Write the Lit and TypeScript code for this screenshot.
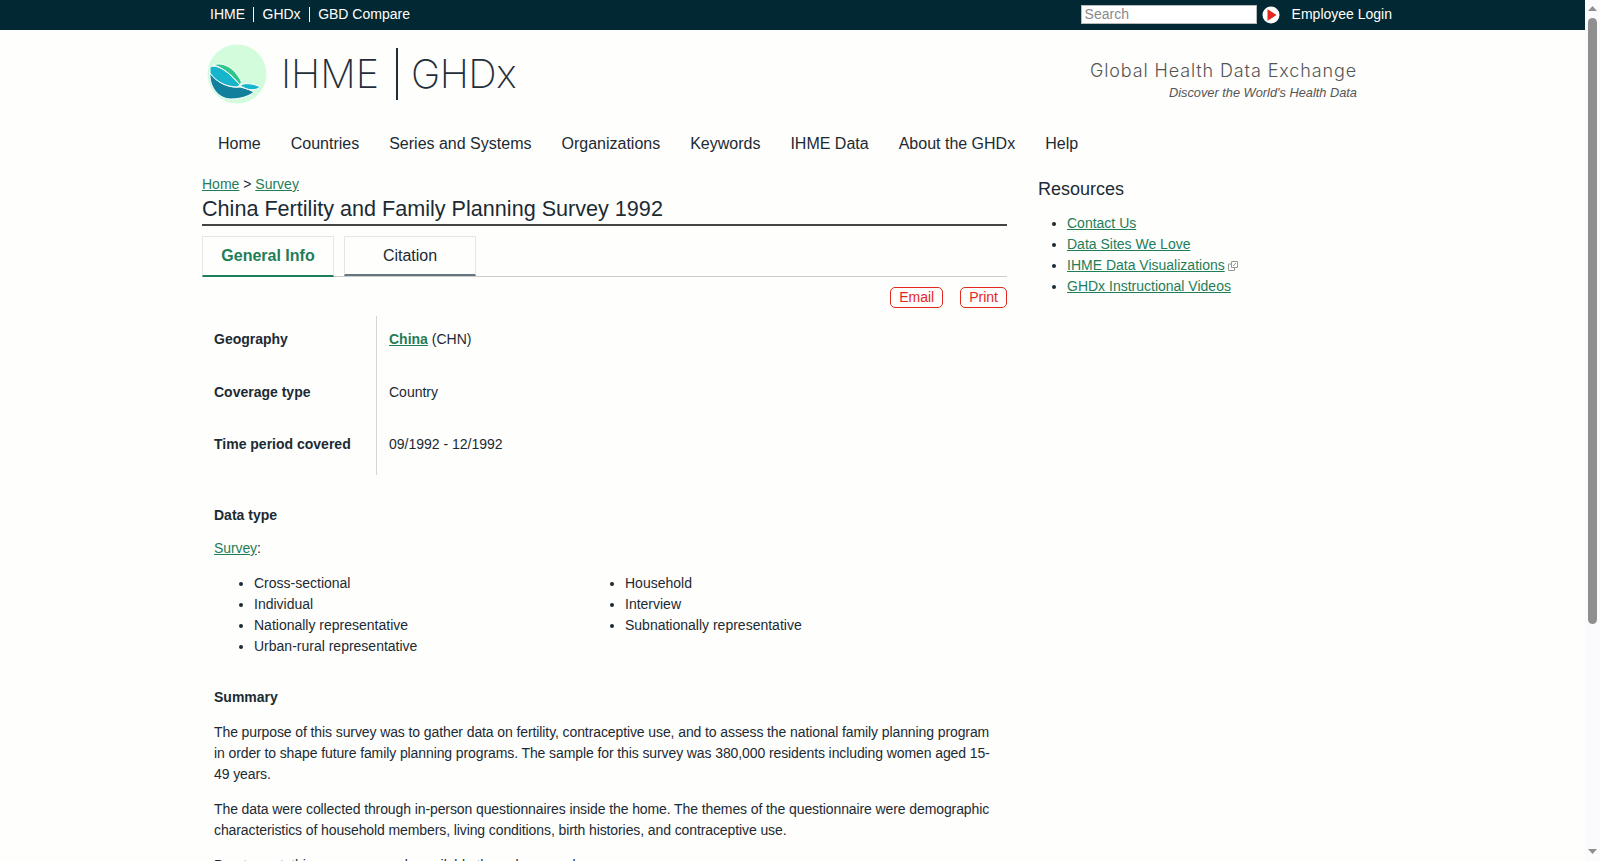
import { LitElement, html, css } from 'lit';
import { customElement } from 'lit/decorators.js';

const nav = ['Home', 'Countries', 'Series and Systems', 'Organizations', 'Keywords', 'IHME Data', 'About the GHDx', 'Help'];
const dataTypes = [
  'Cross-sectional',
  'Household',
  'Individual',
  'Interview',
  'Nationally representative',
  'Subnationally representative',
  'Urban-rural representative',
];

@customElement('app-root')
export class AppRoot extends LitElement {
  static styles = css`
    :host {
      display: flex;
      height: 861px;
      overflow: hidden;
      background: #fefefd;
      color: #1c2a33;
      font-family: 'Liberation Sans', Arial, sans-serif;
      font-size: 14px;
      line-height: 21px;
    }
    a {
      color: #1f7d58;
    }
    .page {
      flex: 1;
      min-width: 0;
      overflow: hidden;
    }
    .topbar {
      box-sizing: border-box;
      height: 30px;
      background: #022933;
      color: #fff;
      display: flex;
      align-items: center;
      padding: 0 193px 1px 202px;
    }
    .toplinks {
      display: flex;
      flex: 1;
      padding-left: 8px;
    }
    .toplinks span {
      line-height: 15px;
      padding-right: 8px;
      margin-right: 8.5px;
      border-right: 1px solid #fff;
    }
    .toplinks span:last-child {
      border: 0;
    }
    .search {
      box-sizing: border-box;
      width: 176px;
      height: 19px;
      background: #fff;
      border: 1px solid #bbb;
      color: #8a8a8a;
      padding: 0 3px;
      line-height: 17px;
    }
    .go {
      margin: 0 12px 0 5px;
      display: block;
    }
    .brand {
      box-sizing: border-box;
      height: 86px;
      display: flex;
      align-items: center;
      padding: 2px 228px 0 207px;
    }
    .wordmark {
      display: flex;
      align-items: center;
      flex: 1;
      margin-left: 14px;
      font-family: Inter, sans-serif;
      font-weight: 200;
      font-size: 39.5px;
      color: #1f2f3a;
    }
    .wordmark i {
      display: block;
      width: 2px;
      height: 52px;
      background: #1f2f3a;
      margin: 0 13px 0 17px;
    }
    .wordmark span {
      letter-spacing: -0.5px;
    }
    .tagline {
      text-align: right;
      margin-top: 12px;
      color: #555;
    }
    .tagline b {
      display: block;
      font-family: Inter, sans-serif;
      font-weight: 300;
      font-size: 18px;
      letter-spacing: 0.88px;
      line-height: 24px;
    }
    .tagline em {
      display: block;
      font-size: 12.8px;
      line-height: 19px;
    }
    .nav {
      display: flex;
      gap: 30px;
      padding: 15px 0 0 218px;
      height: 31px;
      font-size: 16px;
      line-height: 26px;
      color: #1c2a33;
    }
    .columns {
      display: flex;
      padding: 0 0 0 202px;
      margin-top: 12px;
    }
    .main {
      width: 805px;
      flex: none;
    }
    .crumbs {
      line-height: 21px;
    }
    h1 {
      margin: 0;
      font-size: 21.6px;
      font-weight: 400;
      line-height: 27px;
      padding-bottom: 2px;
      border-bottom: 2px solid #444;
    }
    .tabs {
      display: flex;
      gap: 10px;
      margin-top: 10px;
      height: 40px;
      border-bottom: 1px solid #ccc;
    }
    .tab {
      box-sizing: border-box;
      width: 132px;
      height: 40px;
      border: 1px solid #e6e6e6;
      border-bottom: 2px solid #66757d;
      text-align: center;
      font-size: 16px;
      line-height: 37px;
    }
    .tab.active {
      height: 41px;
      border-bottom-color: #1f7d58;
      color: #1f7d58;
      font-weight: 700;
    }
    .actions {
      display: flex;
      justify-content: flex-end;
      gap: 17px;
      margin-top: 10px;
    }
    .actions span {
      box-sizing: border-box;
      height: 21px;
      line-height: 19px;
      padding: 0 8px;
      border: 1px solid #e5281f;
      border-radius: 5px;
      color: #e5281f;
    }
    .facts {
      display: grid;
      grid-template-columns: 174px 1fr;
      margin-top: 8px;
      width: fit-content;
    }
    .facts b,
    .facts div {
      height: 52.5px;
      box-sizing: border-box;
      padding: 13px 12px 0;
    }
    .facts div {
      border-left: 1px solid #d5d5d5;
    }
    .facts b:nth-of-type(3),
    .facts div:last-child {
      height: 54px;
    }
    .body {
      padding: 0 12px;
    }
    .body h4 {
      margin: 30px 0 0;
      font-size: 14px;
    }
    .body p {
      margin: 14px 0 0;
      letter-spacing: -0.1px;
    }
    .body h4 + p.tight {
      margin-top: 12px;
    }
    .types {
      display: grid;
      grid-template-columns: 371px 1fr;
      margin: 14px 0 0;
      padding: 0 0 0 40px;
    }
    .side {
      margin-left: 31px;
    }
    .side h2 {
      margin: 1px 0 0;
      font-size: 18px;
      font-weight: 400;
      line-height: 28px;
    }
    .side ul {
      margin: 10px 0 0;
      padding-left: 29px;
    }
    .ext {
      margin-left: 3px;
      vertical-align: -1px;
    }
    .scrollbar {
      flex: none;
      width: 15px;
      box-sizing: border-box;
      background: #fbfbfd;
      display: flex;
      flex-direction: column;
      align-items: center;
      padding: 6px 0 7px;
    }
    .thumb {
      width: 9px;
      height: 606px;
      margin-top: 7px;
      border-radius: 5px;
      background: #8f8f8f;
    }
    .spacer {
      flex: 1;
    }
    .scrollbar svg {
      display: block;
    }
  `;

  render() {
    return html`
      <div class="page">
        <div class="topbar">
          <div class="toplinks"><span>IHME</span><span>GHDx</span><span>GBD Compare</span></div>
          <div class="search">Search</div>
          <svg class="go" width="18" height="18" viewBox="0 0 18 18">
            <circle cx="9" cy="9" r="8.5" fill="#fff" />
            <path d="M5.5 3.2 14.5 9l-9 5.800z" fill="#e5281f" />
          </svg>
          <span>Employee Login</span>
        </div>
        <div class="brand">
          <svg width="60" height="60" viewBox="0 0 60 60">
            <circle cx="30" cy="30" r="29.500" fill="#d3fcdc" />
            <path d="M3 29C2 42 11 55 24 55 34 55 42 52 47 48 41 45 37 44 33 43 24 44 12 41 3 29z" fill="#127f9c" stroke="#fff" stroke-width="1" />
            <path d="M3 23C10 20 20 26 33 41L30 43C20 43 9 38 3 29z" fill="#17b5cc" stroke="#fff" stroke-width="1" />
            <path d="M6 21C18 17 29 26 34.500 38L33 41C24 30 15 23 6 21z" fill="#2fc78c" stroke="#fff" stroke-width="1" />
            <path d="M33 41C38 39 46 39 53 43 49 47 40 47 33 41z" fill="#17b5cc" stroke="#fff" stroke-width="1" />
          </svg>
          <div class="wordmark">IHME<i></i><span>GHDx</span></div>
          <div class="tagline"><b>Global Health Data Exchange</b><em>Discover the World's Health Data</em></div>
        </div>
        <div class="nav">${nav.map((n) => html`<span>${n}</span>`)}</div>
        <div class="columns">
          <div class="main">
            <div class="crumbs"><a href="#">Home</a> &gt; <a href="#">Survey</a></div>
            <h1>China Fertility and Family Planning Survey 1992</h1>
            <div class="tabs">
              <div class="tab active">General Info</div>
              <div class="tab">Citation</div>
            </div>
            <div class="actions"><span>Email</span><span>Print</span></div>
            <div class="facts">
              <b>Geography</b>
              <div><a href="#"><strong>China</strong></a> (CHN)</div>
              <b>Coverage type</b>
              <div>Country</div>
              <b>Time period covered</b>
              <div>09/1992 - 12/1992</div>
            </div>
            <div class="body">
              <h4>Data type</h4>
              <p class="tight"><a href="#">Survey</a>:</p>
              <ul class="types">
                ${dataTypes.map((t) => html`<li>${t}</li>`)}
              </ul>
              <h4>Summary</h4>
              <p>
                The purpose of this survey was to gather data on fertility, contraceptive use, and to assess the national
                family planning program in order to shape future family planning programs. The sample for this survey was
                380,000 residents including women aged 15-49 years.
              </p>
              <p>
                The data were collected through in-person questionnaires inside the home. The themes of the questionnaire
                were demographic characteristics of household members, living conditions, birth histories, and contraceptive
                use.
              </p>
              <p>Due to cost, this survey was only available through a sample.</p>
            </div>
          </div>
          <div class="side">
            <h2>Resources</h2>
            <ul>
              <li><a href="#">Contact Us</a></li>
              <li><a href="#">Data Sites We Love</a></li>
              <li>
                <a href="#">IHME Data Visualizations</a><svg class="ext" width="10" height="10" viewBox="0 0 10 10" fill="none" stroke="#999">
                  <path d="M3.500.5h6v6h-6zM3.500 3H.5v6.500h6v-3M5 5l3-3" />
                </svg>
              </li>
              <li><a href="#">GHDx Instructional Videos</a></li>
            </ul>
          </div>
        </div>
      </div>
      <div class="scrollbar">
        <svg width="9" height="5" viewBox="0 0 9 5"><path d="M4.500 0 9 5H0z" fill="#8f8f8f" /></svg>
        <div class="thumb"></div>
        <div class="spacer"></div>
        <svg width="9" height="5" viewBox="0 0 9 5"><path d="M0 0h9L4.500 5z" fill="#8f8f8f" /></svg>
      </div>
    `;
  }
}
